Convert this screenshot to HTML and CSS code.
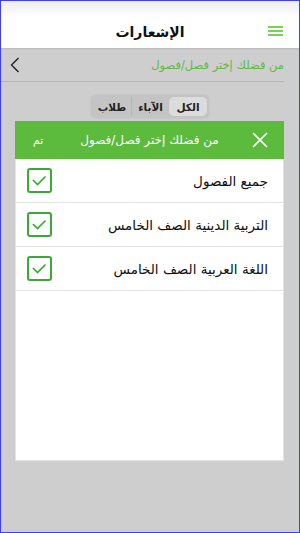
FILE: index.html
```html
<!DOCTYPE html>
<html lang="ar" dir="rtl">
<head>
  <meta charset="UTF-8" />
  <meta name="viewport" content="width=device-width, initial-scale=1.0"/>
  <title>الإشعارات</title>
  <link rel="stylesheet" href="styles.css">
</head>
<body>
  <div class="app">
    <header class="topbar">
      <span class="menu"><i></i><i></i><i></i></span>
      <h1>الإشعارات</h1>
    </header>

    <div class="subrow">
      <span class="subtitle">من فضلك إختر فصل/فصول</span>
      <svg class="back" width="10" height="16" viewBox="0 0 10 16">
        <path d="M8.5 1 L1.5 8 L8.5 15" fill="none" stroke="#222" stroke-width="1.4"/>
      </svg>
    </div>

    <div class="segments">
      <span class="seg active">الكل</span>
      <span class="seg">الآباء</span>
      <span class="seg">طلاب</span>
    </div>

    <div class="modal">
      <div class="modal-head">
        <svg class="close" width="16" height="16" viewBox="0 0 16 16">
          <path d="M1 1 L15 15 M15 1 L1 15" stroke="#fff" stroke-width="1.6"/>
        </svg>
        <span class="modal-title">من فضلك إختر فصل/فصول</span>
        <span class="done">تم</span>
      </div>
      <ul class="list">
        <li><span>جميع الفصول</span><b class="check"><svg width="21" height="21" viewBox="0 0 21 21"><path d="M4 10 L8.5 14.5 L16.5 6.5" fill="none" stroke="#3aa936" stroke-width="1.7"/></svg></b></li>
        <li><span>التربية الدينية الصف الخامس</span><b class="check"><svg width="21" height="21" viewBox="0 0 21 21"><path d="M4 10 L8.5 14.5 L16.5 6.5" fill="none" stroke="#3aa936" stroke-width="1.7"/></svg></b></li>
        <li><span>اللغة العربية الصف الخامس</span><b class="check"><svg width="21" height="21" viewBox="0 0 21 21"><path d="M4 10 L8.5 14.5 L16.5 6.5" fill="none" stroke="#3aa936" stroke-width="1.7"/></svg></b></li>
      </ul>
    </div>
  </div>
</body>
</html>
```

FILE: styles.css
```css
* { box-sizing: border-box; }

body {
  margin: 0;
  font-family: "DejaVu Sans", "Noto Sans", sans-serif;
}

.app {
  width: 300px;
  height: 533px;
  border: 1px solid #3f3ff2;
  background: #cecece;
  display: flex;
  flex-direction: column;
  overflow: hidden;
}

.topbar {
  height: 47px;
  flex-shrink: 0;
  background: linear-gradient(to bottom, #ececec 0, #fff 16px);
  display: flex;
  align-items: center;
  justify-content: center;
  position: relative;
  padding-top: 14px;
  box-shadow: 0 1px 1px rgba(0,0,0,0.08);
}

.topbar h1 {
  margin: 0;
  font-size: 14px;
  font-weight: bold;
  color: #111;
}

.menu {
  position: absolute;
  right: 16px;
  top: 25px;
  width: 15px;
  display: flex;
  flex-direction: column;
  gap: 2px;
}

.menu i {
  display: block;
  height: 2px;
  background: #7bd157;
}

.subrow {
  height: 34px;
  margin-right: 15px;
  padding-left: 9px;
  border-bottom: 1px solid #b6b6b6;
  display: flex;
  align-items: center;
  justify-content: space-between;
}

.subtitle {
  color: #63b942;
  font-size: 11.5px;
}

.back { margin-top: 1px; }

.segments {
  align-self: center;
  margin-top: 12px;
  height: 25px;
  padding: 2px;
  background: #c4c4c4;
  border: 1px solid #c9c9c9;
  border-radius: 6px;
  display: flex;
}

.seg {
  width: 38px;
  font-size: 10.5px;
  font-weight: bold;
  color: #222;
  display: flex;
  align-items: center;
  justify-content: center;
  border-left: 1px solid #b5b5b5;
}

.seg:last-child { border-left: none; }

.seg.active {
  background: #dcdcdc;
  border-radius: 5px;
  border-left: none;
}

.modal {
  margin: 2px 15px 0 14px;
  height: 340px;
  background: #fff;
  border: 1px solid #e2e2e2;
  border-top: none;
  display: flex;
  flex-direction: column;
}

.modal-head {
  height: 38px;
  margin: 0 -1px;
  background: #5cba3c;
  color: #fff;
  display: grid;
  grid-template-columns: 1fr auto 1fr;
  align-items: center;
}

.close {
  justify-self: start;
  margin-right: 16px;
}

.modal-title {
  font-size: 12px;
}

.done {
  justify-self: end;
  margin-left: 18px;
  font-size: 11px;
}

.list {
  list-style: none;
  margin: 0;
  padding: 0;
}

.list li {
  height: 44px;
  border-bottom: 1px solid #e3e3e3;
  display: flex;
  align-items: center;
  justify-content: space-between;
  padding: 0 15px 0 11px;
  font-size: 13.5px;
  color: #111;
}

.check {
  width: 25px;
  height: 25px;
  border: 2px solid #3aa936;
  border-radius: 3px;
  display: flex;
}
```
